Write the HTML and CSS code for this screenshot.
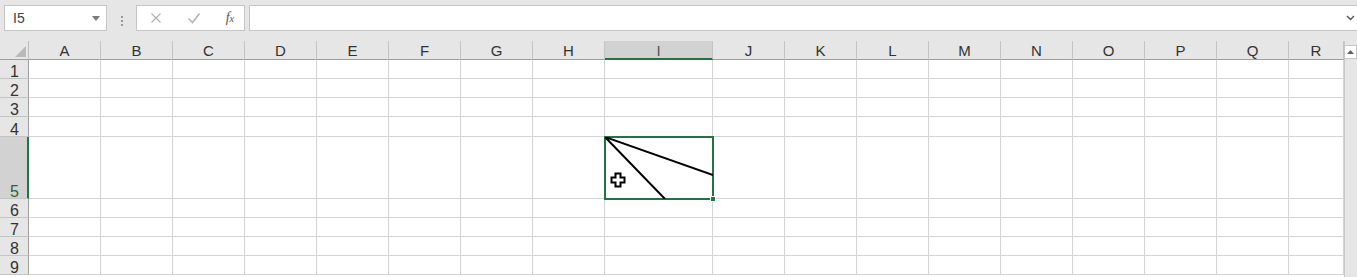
FILE: index.html
```html
<!DOCTYPE html>
<html lang="en">
<head>
    <meta charset="UTF-8">
    <title>Sheet</title>
    <link rel="stylesheet" href="styles.css">
</head>
<body>
    <!-- Formula bar -->
    <div class="toolbar">
        <div class="name-box">
            <span>I5</span>
            <svg class="caret" width="8" height="5" viewBox="0 0 8 5"><path d="M0 0h8L4 5z" fill="#7a7a7a"/></svg>
        </div>
        <div class="grip"><i></i><i></i><i></i></div>
        <div class="fx-box">
            <svg width="12" height="12" viewBox="0 0 12 12"><path d="M1.5 1.5l9 9M10.5 1.5l-9 9" stroke="#b4b4b4" stroke-width="1.3"/></svg>
            <svg width="14" height="12" viewBox="0 0 14 12"><path d="M1.5 6.5l4 4 7-9" stroke="#b4b4b4" stroke-width="1.6" fill="none"/></svg>
            <span class="fx">f<sub>x</sub></span>
        </div>
        <div class="formula">
            <svg width="9" height="6" viewBox="0 0 9 6"><path d="M1 1l3.5 3.5L8 1" stroke="#555" stroke-width="1.4" fill="none"/></svg>
        </div>
    </div>

    <!-- Sheet -->
    <div class="sheet">
        <div class="grid" id="grid"></div>
        <div class="vscroll">
            <div class="up"><svg width="7" height="4" viewBox="0 0 7 4"><path d="M0 4h7L3.5 0z" fill="#606060"/></svg></div>
        </div>
    </div>

    <script>
        var cols = ['A','B','C','D','E','F','G','H','I','J','K','L','M','N','O','P','Q','R'];
        var rows = [1,2,3,4,5,6,7,8,9];
        var grid = document.getElementById('grid');
        var html = '<div class="corner"><svg width="11" height="11" viewBox="0 0 11 11"><path d="M11 0v11H0z" fill="#b9b9b9"/></svg></div>';

        cols.forEach(function (c) {
            html += '<div class="col-head' + (c === 'I' ? ' active' : '') + '">' + c + '</div>';
        });
        rows.forEach(function (r) {
            html += '<div class="row-head' + (r === 5 ? ' active' : '') + '">' + r + '</div>';
            cols.forEach(function (c) {
                var cls = 'cell';
                if (r === 5 && c === 'I') cls += ' selected';
                html += '<div class="' + cls + '"></div>';
            });
        });
        grid.innerHTML = html;

        // diagonal lines in the selected cell
        var sel = grid.querySelector('.selected');
        sel.innerHTML =
            '<svg class="diag" width="108" height="62" viewBox="0 0 108 62">' +
            '<path d="M0 0L108 38M0 0L60 62" stroke="#000" stroke-width="2" fill="none"/></svg>' +
            '<svg class="cursor" width="16" height="16" viewBox="0 0 16 16">' +
            '<path d="M5.5 1.5h5v4h4v5h-4v4h-5v-4h-4v-5h4z" fill="#fff" stroke="#000" stroke-width="2"/></svg>' +
            '<span class="handle"></span>';
    </script>
</body>
</html>
```

FILE: styles.css
```css
* {
    margin: 0;
    padding: 0;
    box-sizing: border-box;
}

body {
    width: 1357px;
    height: 277px;
    overflow: hidden;
    background: #e6e6e6;
    font-family: "Liberation Sans", Arial, sans-serif;
    color: #222;
}

/* Formula bar */
.toolbar {
    display: flex;
    align-items: center;
    height: 41px;
    padding: 5px 0 5px 4px;
}

.name-box {
    width: 103px;
    height: 26px;
    background: #fff;
    border: 1px solid #c6c6c6;
    display: flex;
    align-items: center;
    justify-content: space-between;
    padding: 0 6px 0 8px;
    font-size: 14px;
    color: #444;
    align-self: flex-start;
}

.grip {
    width: 29px;
    display: flex;
    flex-direction: column;
    align-items: center;
    gap: 2px;
    align-self: flex-start;
    margin-top: 11px;
}

.grip i {
    width: 2px;
    height: 2px;
    background: #9a9a9a;
}

.fx-box {
    width: 109px;
    height: 26px;
    background: #fff;
    border: 1px solid #c6c6c6;
    display: flex;
    align-items: center;
    justify-content: space-between;
    padding: 0 10px 0 13px;
    align-self: flex-start;
}

.fx {
    font-family: "Liberation Serif", serif;
    font-style: italic;
    font-size: 14px;
    color: #555;
}

.fx sub {
    font-size: 10px;
    vertical-align: 0;
}

.formula {
    flex: 1;
    height: 26px;
    margin-left: 4px;
    background: #fff;
    border: 1px solid #c6c6c6;
    border-right: none;
    display: flex;
    align-items: center;
    justify-content: flex-end;
    padding-right: 2px;
    align-self: flex-start;
}

/* Sheet */
.sheet {
    display: flex;
    height: 236px;
}

.grid {
    display: grid;
    grid-template-columns: 29px repeat(8, 72px) 108px repeat(8, 72px) 55px;
    grid-template-rows: 19px 19px 19px 19px 20px 62px 19px 19px 19px 19px;
    background: #fff;
    width: 1344px;
    overflow: hidden;
}

.corner {
    background: #e6e6e6;
    border-right: 1px solid #bdbdbd;
    border-bottom: 1px solid #9f9f9f;
    display: flex;
    align-items: flex-end;
    justify-content: flex-end;
    padding: 0 2px 2px 0;
}

.col-head {
    background: #e6e6e6;
    border-right: 1px solid #c4c4c4;
    border-bottom: 1px solid #9f9f9f;
    text-align: center;
    font-size: 15px;
    line-height: 20px;
    color: #333;
}

.col-head.active {
    background: #d2d2d2;
    border-bottom: 2px solid #217346;
    color: #555;
}

.row-head {
    background: #e6e6e6;
    border-right: 1px solid #9f9f9f;
    border-bottom: 1px solid #c4c4c4;
    font-size: 16px;
    line-height: 13px;
    padding-left: 10px;
    display: flex;
    align-items: flex-end;
    color: #333;
}

.row-head.active {
    background: #d2d2d2;
    border-right: 2px solid #217346;
    color: #2e5e3e;
}

.cell {
    border-right: 1px solid #d4d4d4;
    border-bottom: 1px solid #d4d4d4;
}

.cell.selected {
    position: relative;
    border: 2px solid #217346;
    margin: -1px;
    z-index: 1;
}

.diag {
    position: absolute;
    left: -1px;
    top: -1px;
}

.cursor {
    position: absolute;
    left: 4px;
    top: 34px;
}

.handle {
    position: absolute;
    right: -4px;
    bottom: -4px;
    width: 6px;
    height: 6px;
    background: #217346;
    border: 1px solid #fff;
}

.vscroll {
    width: 13px;
    background: #e6e6e6;
    border-left: 1px solid #c8c8c8;
    padding-top: 4px;
}

.up {
    height: 14px;
    background: #fff;
    border: 1px solid #c8c8c8;
    border-left: none;
    display: flex;
    align-items: center;
    justify-content: center;
}
```
